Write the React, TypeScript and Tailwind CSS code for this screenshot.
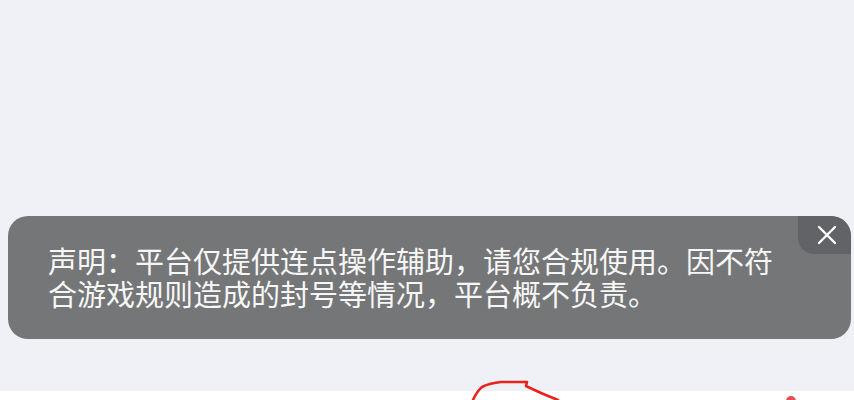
export default function App() {
  return (
    <div className="relative w-[854px] h-[400px] overflow-hidden bg-[#f0f1f6] flex flex-col" style={{ fontFamily: '"Noto Sans CJK SC", "Liberation Sans", sans-serif' }}>
      <div className="flex-1 pt-[216px] pl-2 pr-[3px]">
        <div className="relative h-[123px] rounded-[20px] bg-[#757678] pl-10 pr-[72px] pt-[28px] text-[29px] leading-[33px] text-[#f7f7f7]">
          <p className="w-[740px]">声明：平台仅提供连点操作辅助，请您合规使用。因不符合游戏规则造成的封号等情况，平台概不负责。</p>
          <button className="absolute top-0 right-0 w-[53px] h-[38px] bg-[#626366] rounded-tr-[20px] rounded-bl-[16px] flex items-center justify-center pl-1">
            <svg width="20" height="20" viewBox="0 0 20 20" fill="none" stroke="#ffffff" strokeWidth="2.4" strokeLinecap="round">
              <path d="M2 2 L18 18 M18 2 L2 18" />
            </svg>
          </button>
        </div>
      </div>
      <div className="h-[9px] bg-white shrink-0" />
      <svg className="absolute left-0 top-0 pointer-events-none" width="854" height="400" viewBox="0 0 854 400" fill="none">
        <path d="M473 400 Q477 391 482 387 Q490 383 501 382 L527 382 L526 386 Q540 393 558 400" stroke="#e8231a" strokeWidth="2.6" strokeLinecap="round" strokeLinejoin="round" />
        <circle cx="791" cy="401" r="5" fill="#e2505a" />
      </svg>
    </div>
  );
}
